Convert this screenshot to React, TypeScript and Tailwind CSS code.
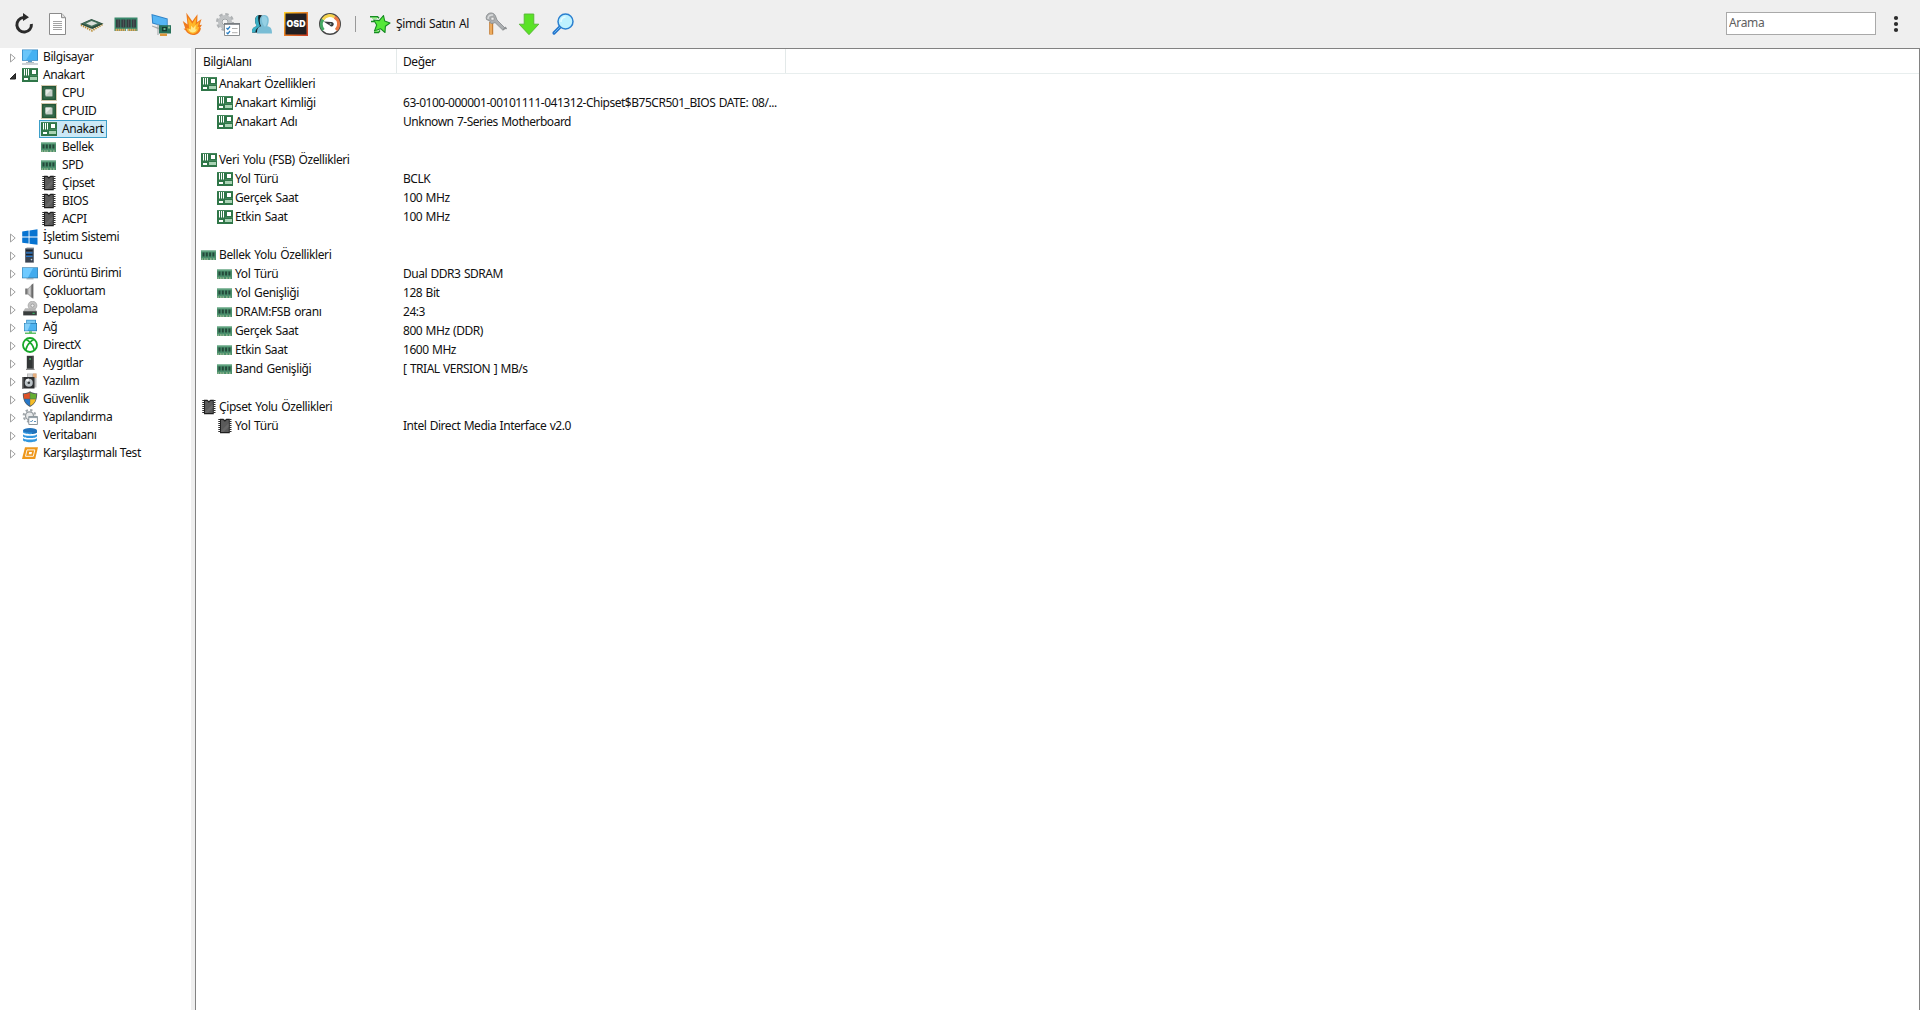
import type { ReactNode } from 'react'

interface TreeNode {
  label: string
  icon: ReactNode
  child?: boolean
  open?: boolean
  selected?: boolean
}

interface InfoRow {
  label?: string
  value?: string
  icon?: ReactNode
  group?: boolean
}

function Small({ children }: { children: ReactNode }) {
  return <svg className="w-4 h-4 shrink-0" viewBox="0 0 16 16">{children}</svg>
}

function Large({ children }: { children: ReactNode }) {
  return <svg className="w-6 h-6 shrink-0" viewBox="0 0 24 24" fill="none">{children}</svg>
}

/* ---- 16px icons ---- */

const Board = () => (
  <Small>
    <path fill="#2f7648" d="M0 1h16v14H0z" />
    <path fill="#fff" d="M2 2h1v6.500H2zM4 2h1v6.500H4zM6 2h1v6.500H6zM10 3h4v4h-4zM2 11h4v2H2z" />
    <path fill="#a9d3b4" d="M8 10h7v3H8z" />
    <path fill="#58966d" d="M0 1h16v.6H0zM8 8.500h8v.6H8z" />
  </Small>
)

const Cpu = () => (
  <Small>
    <rect x=".5" y=".5" width="15" height="15" fill="none" stroke="#a8935a" strokeDasharray="1 1" />
    <path fill="#245537" d="M1 1h14v14H1z" />
    <path fill="#3f7453" d="M2.500 2.500h11v11h-11z" />
    <path fill="#29583c" d="M3.500 3.500h9v9h-9z" />
    <path fill="#c5cfc7" d="M4.500 4.500h7v7h-7z" />
    <path fill="#e6ebe6" d="M4.500 4.500h6l-6 6z" />
  </Small>
)

const Memory = () => (
  <Small>
    <path fill="#4a8f6c" d="M0 3.500h15V13H0z" />
    <path fill="#74b391" d="M0 3.500h15v1H0z" />
    <path fill="#24493a" d="M1.500 5.500h2v4h-2zM4.800 5.500h2v4h-2zM8.100 5.500h2v4h-2zM11.400 5.500h2v4h-2z" />
    <path fill="#8fb48c" d="M.5 11.300h1.600v1.600H.5zM3 11.300h1.600v1.600H3zM5.500 11.300h1.600v1.600H5.500zM9 11.300h1.600v1.600H9zM12 11.300h1.600v1.600H12z" />
  </Small>
)

const Chip = () => (
  <Small>
    <path d="M2.300 1v14M13.500 1v14" stroke="#2b2b2b" strokeWidth="2" strokeDasharray="1 1" />
    <path fill="#1f1f1f" d="M3 .7h3.400l1.500 1.300L9.400.7h3.400v14.600H3z" />
    <path fill="#5a5a5a" d="M4 2h2l1.900 1.800L9.800 2h2v12H4z" />
    <path fill="#777" d="M4 13l7.800-8v4L6.500 14H4z" opacity=".45" />
  </Small>
)

const Computer = () => (
  <Small>
    <path fill="#3385bf" d="M0 .5h16v11.300H0z" />
    <path fill="#45b1f2" d="M.8 1.200h14.400v9.800H.8z" />
    <path fill="#6ac6fa" d="M.8 1.200h9.400L4 11H.8z" />
    <path fill="#5a9bc7" d="M6 11.800h4v1.400H6z" />
    <path fill="#99a5ad" d="M4 13h8v.8H4zM0 14.500h16v.9H0z" />
  </Small>
)

const Windows = () => (
  <Small>
    <path fill="#0874d1" d="M.2 2.400l6.400-.9v6.100H.2zM7.500 1.400L15.500.3v7.300h-8zM.2 8.500h6.400v6.100l-6.400-.9zM7.500 8.500h8v7.300l-8-1.100z" />
  </Small>
)

const Server = () => (
  <Small>
    <path fill="#939aa0" d="M3.200 1.400L5 .4h7l-1.200 1z" />
    <path fill="#3b4451" d="M3.200 1.400h8.600v14.200H3.200z" />
    <path fill="#6c7580" d="M11 1.400l1-.8v14l-1 1z" />
    <path fill="#277ad0" d="M4 5.200h6.500v1.200H4zM4 8.800h6.500V10H4z" />
    <path fill="#1a222c" d="M4 3h6.500v1H4zM4 7h6.500v1H4z" />
    <circle cx="9.500" cy="12.600" r=".8" fill="#ccd5df" />
  </Small>
)

const Display = () => (
  <Small>
    <path fill="#3a81ae" d="M0 2.300h16v11H0z" />
    <path fill="#42abee" d="M.7 3h14.600v9.400H.7z" />
    <path fill="#6fcaff" d="M.7 3H11L6 12.400H.7z" />
    <path fill="#879aa6" d="M4.500 13.300h7v1h-7z" />
  </Small>
)

const Speaker = () => (
  <Small>
    <path fill="#777" d="M3.200 5.500h2.600v6H3.200z" />
    <path fill="#a6a6a6" d="M5.800 5.500L10.600.7v15L5.800 11.500z" />
    <path fill="#6a6a6a" d="M9.400 2L11.400.3v15.400l-2-1.700z" />
    <path fill="#ccc" d="M6.500 6l2-2v8l-2-1.500z" />
  </Small>
)

const Storage = () => (
  <Small>
    <circle cx="10.500" cy="4.600" r="4.400" fill="#c3c3c3" stroke="#999" strokeWidth=".6" />
    <circle cx="10.500" cy="4.600" r="1.600" fill="#eee" stroke="#8c8c8c" strokeWidth=".7" />
    <path fill="#b4b4b4" d="M3.200 7.200h9.600l2 3H1.200z" />
    <path fill="#393d3d" d="M1.200 10.200h13.600v4.200H1.200z" />
    <path fill="#36bd69" d="M10.500 11.800h2.200v1.100h-2.200z" />
  </Small>
)

const Network = () => (
  <Small>
    <path fill="#348cc6" d="M4.200.8H14v9.400H4.200z" />
    <path fill="#79c8f2" d="M5 1.500h8.200v3H5z" />
    <path fill="#246f9e" d="M2 4h13v8.200H2z" />
    <path fill="#4eb3f0" d="M2.600 4.600h11.800v7H2.600z" />
    <path fill="#85d0fa" d="M2.600 4.600h6l-3 7h-3z" />
    <path fill="#5fbf68" d="M3 13.600h11v1.400H3zM7 12.200h3v2H7z" />
  </Small>
)

const DirectX = () => (
  <Small>
    <circle cx="8" cy="8" r="7" fill="#fff" stroke="#17a92a" strokeWidth="1.800" />
    <path fill="none" stroke="#17a92a" strokeWidth="1.700" d="M3.600 13.200C4.600 9.500 6.200 6.800 8 5.300c1.800 1.500 3.400 4.200 4.400 7.900M4.300 3C6 3 7 4.200 8 5.300 9 4.200 10 3 11.700 3" />
  </Small>
)

const Device = () => (
  <Small>
    <path fill="#333637" d="M4.800.8h6.800v13H4.800z" />
    <path fill="#555" d="M10.500.8h1.200v13h-1.200z" />
    <path fill="#3ece65" d="M7.300 3.200h1.600v1.600H7.300z" />
    <path fill="#8c8c8c" d="M4 13.800h8.600v1.200H4z" />
  </Small>
)

const Software = () => (
  <Small>
    <path fill="#b8b8b8" d="M5 .5h9.500v14H5z" />
    <path fill="#e4ad7c" d="M11 .5h3.500v4.500H11z" />
    <path fill="#d7d7d7" d="M6 1.300h4v3H6z" />
    <path fill="#2d2f31" d="M0 4h12.500v11.500H0z" />
    <circle cx="6.800" cy="9.800" r="4" fill="#bcc3c7" />
    <path fill="#f1f3f4" d="M6.800 9.800L3.500 7a4.300 4.300 0 0 1 3.300-1.500z" />
    <circle cx="6.800" cy="9.800" r="1.300" fill="#33383a" />
    <path fill="#777" d="M0 4h1.500v11.500H0z" />
  </Small>
)

const Shield = () => (
  <Small>
    <path fill="#525a5f" d="M8 .2C10 1.600 12.500 2.200 15.200 2.200c0 6.200-1.700 11-7.200 13.700C2.500 13.200.8 8.400.8 2.200 3.500 2.200 6 1.600 8 .2z" />
    <path fill="#df5328" d="M7.800 1.500v6.300H2.100C1.800 6.300 1.700 4.700 1.700 3.100c2.300-.1 4.300-.6 6.100-1.600z" />
    <path fill="#65ae32" d="M8.200 1.500c1.800 1 3.800 1.500 6.100 1.600 0 1.600-.1 3.200-.4 4.700H8.200z" />
    <path fill="#2777c8" d="M2.200 8.200h5.600v6.600c-3.200-1.700-4.900-3.900-5.600-6.600z" />
    <path fill="#f6bd28" d="M8.200 8.200h5.600c-.7 2.700-2.400 4.900-5.600 6.600z" />
  </Small>
)

const Config = () => (
  <Small>
    <circle cx="7.500" cy="6.800" r="5.800" fill="none" stroke="#a2a8ac" strokeWidth="2.200" strokeDasharray="2.300 2.250" />
    <circle cx="7.500" cy="6.800" r="4" fill="#e8eaeb" stroke="#969ca0" strokeWidth="1.300" />
    <path fill="#fff" stroke="#7f898f" strokeWidth=".9" d="M6.800 7.500h8.600v8H6.800z" />
    <path fill="#98a4ab" d="M6.800 7.500h8.600v1.600H6.800z" />
    <path fill="none" stroke="#4c88b5" strokeWidth=".9" d="M8.300 12l1 1 1.500-2M12 12.500h2" />
  </Small>
)

const Database = () => (
  <Small>
    <path fill="#3297df" d="M1 3.300v1.800c0 2.800 14 2.800 14 0V3.300zM1 7.200v1.700c0 2.900 14 2.900 14 0V7.200c-1 2-13 2-14 0zM1 11.100v2c0 2.900 14 2.900 14 0v-2c-1 2-13 2-14 0z" />
    <ellipse cx="8" cy="3.300" rx="7" ry="2.300" fill="#2273bc" />
    <path fill="#1d69ad" d="M10 6.900c3-.2 5-.8 5-1.800v-1C14 5 12 5.500 10 5.700z" />
  </Small>
)

const Benchmark = () => (
  <Small>
    <path fill="#ee971b" d="M3 2.300h13l-2.800 11.600H0z" />
    <path fill="none" stroke="#fff" strokeWidth=".9" d="M5 4.900h7.800l-1.500 6.400H3.500z" />
    <path fill="#fff" d="M7.200 7h2.800l-.5 2.200H6.700z" />
  </Small>
)

/* ---- toolbar icons ---- */

const TOOLS: ReactNode[] = [
  <Large key="refresh">
    <path d="M11.500 5.500a7.300 7.300 0 1 0 7.900 6.500" stroke="#2b2b2b" strokeWidth="3" />
    <path d="M11 1l6 4.300L11 9z" fill="#2b2b2b" />
  </Large>,
  <Large key="report">
    <path d="M3.500 1.500h12.300l3.700 4v17h-16z" fill="#fff" stroke="#8b8b8b" />
    <path d="M15.500 1.500v4.200h4" fill="#ddd" stroke="#8b8b8b" />
    <path d="M7 9.500h9M7 11.500h9M7 13.500h9M7 15.500h9M7 17.500h9" stroke="#999" strokeWidth=".9" />
  </Large>,
  <Large key="cpu">
    <path d="M1 13l11 5.500L23 12" stroke="#b98c32" strokeWidth="2.200" strokeDasharray="1.300 1" />
    <path d="M0 12l11.500-5L23.500 11.700 12.300 17z" fill="#2b4c3d" />
    <path d="M2 11.500l9.500-4 9.500 3.800-9.500 4z" fill="#45705b" />
    <path d="M6 11.500l5.500-2.400 6 2.200-5.800 2.500z" fill="#dbe0da" />
  </Large>,
  <Large key="ram">
    <path d="M.5 5.500h23V19H.5z" fill="#39886b" />
    <path d="M2 7.500h4.300v8H2zM7.300 7.500h4.200v8H7.300zM12.500 7.500h4.200v8h-4.200zM17.700 7.500H22v8h-4.300z" fill="#343c40" />
    <path d="M4.200 7.500v8M9.400 7.500v8M14.600 7.500v8M19.800 7.500v8" stroke="#646b6f" strokeWidth=".6" />
    <path d="M1.500 17.800h10M14 17.800h8.500" stroke="#e0a65a" strokeWidth="2.200" strokeDasharray="1.500 .5" />
    <path d="M11.800 16.800h1.800V19h-1.800z" fill="#efefef" />
  </Large>,
  <Large key="display">
    <path d="M4 13.500l8 2.500-1 1.500-7-3z" fill="#aaa" />
    <path d="M3.500 2l16.200 4.500v9.500L4.200 11.500z" fill="#2e82c7" />
    <path d="M4.500 3.300l14.300 4v7.400L5.200 10.700z" fill="#55b5f4" />
    <path d="M11 13.200h12v8.300H11z" fill="#29725b" />
    <path d="M14 15h5v4.300h-5z" fill="#163a32" />
    <path d="M15.500 16h2v2h-2z" fill="#67b88d" />
    <path d="M20 14.500h2v2h-2z" fill="#92bb93" />
    <path d="M12 21.500h7V24h-7z" fill="#dd963b" />
    <path d="M10 12v11" stroke="#9ba1a3" />
  </Large>,
  <Large key="flame">
    <path d="M11 23C7.500 22.600 5 21 3.700 18.500L1.500 16.800l1.800-.2L.8 9l4.700 3.600L4.300.8l6 8.500L15.500 2.200l-.3 8L19.500 7l-1.800 6 2.300-.3-2 3.300 1 .2c-1 4.500-4 7-8 6.800z" fill="#ef7a1c" />
    <path d="M10.500 21.800c-3.500-.5-5.700-2.800-6-5.800l2.700.8-1.500-11.500 4.600 6.500L14.300 5.500 13.500 13l4-3.500-2 5.500 1.800-.3c-1 4.500-3.300 7.200-6.800 7.100z" fill="#ffb728" />
    <path d="M10.300 20.500c-2.500-.4-3.500-2-3.700-3.700l2.300.7.300-4 2 2.500 2.600-3-.5 4.500 1.500-.3c-.8 2.200-2.300 3.500-4.500 3.300z" fill="#ffe98a" />
  </Large>,
  <Large key="settings">
    <circle cx="9" cy="10" r="7.500" stroke="#afb2b4" strokeWidth="3" strokeDasharray="3.300 2.590" />
    <circle cx="9" cy="10" r="5.300" fill="#d9dbdc" stroke="#bfc2c4" strokeWidth="3.500" />
    <circle cx="9" cy="10" r="3" fill="#f3f3f3" stroke="#8c9093" strokeWidth=".8" />
    <path d="M8.500 11.500h15v12h-15z" fill="#fff" stroke="#8b8f91" />
    <path d="M8 11h16v1.800H8z" fill="#777c80" />
    <path d="M10.500 16l1.300 1.300 2.200-2.800M10.500 20.500l1.300 1.300L14 19" stroke="#287ec3" strokeWidth="1.300" />
    <path d="M16 16.500h5.500M16 20.700h5.500" stroke="#999" strokeWidth=".8" />
  </Large>,
  <Large key="users">
    <path d="M2 20.500c0-4 1.500-5.300 5-6.300C3.500 9 5 3 10 3c2 0 3.500 1 4.500 3L13 21z" fill="#111b21" />
    <path d="M2 20.500c0-4 1.300-5.300 4.500-6.300C4 9 5 4 8.500 3.300c-1 4 .5 8 1.500 11C7.500 16 5.500 17 5.500 20.500z" fill="#3aafc5" />
    <path d="M7 21.500c0-5 1-6.500 4.200-7.200-2.700-5-1.700-11.300 3.100-11.300s5.700 5.800 3 11.300c3.500.8 4.700 2.200 4.700 7.200z" fill="#79bdd5" />
    <path d="M12 5c2-2 5.500-.5 5.300 3.500-.1 3-1.300 5-2.300 6.500-2-2.500-4-6-3-10z" fill="#95d0e4" />
  </Large>,
  <Large key="osd">
    <defs>
      <linearGradient id="osd" x1="0" y1="0" x2="1" y2="1">
        <stop offset="0" stopColor="#ffd22b" />
        <stop offset=".5" stopColor="#e87d25" />
        <stop offset="1" stopColor="#c93822" />
      </linearGradient>
    </defs>
    <path d="M0 0h24v24H0z" fill="url(#osd)" />
    <path d="M1.500 1.500h21v21h-21z" fill="#211f22" />
    <text x="12" y="14.600" textAnchor="middle" textLength="19" lengthAdjust="spacingAndGlyphs" className="font-['Inter',sans-serif] text-[9px] font-black tracking-normal" fill="#fff">OSD</text>
  </Large>,
  <Large key="gauge">
    <circle cx="12" cy="12" r="10.300" fill="#fff" stroke="#464646" strokeWidth="1.400" />
    <path d="M5.500 18A8 8 0 0 1 5 7.500" stroke="#45aa64" strokeWidth="3" />
    <path d="M5 7.500a8 8 0 0 1 11.500-2.400" stroke="#f4d24d" strokeWidth="3" />
    <path d="M16.500 5.100A8 8 0 0 1 18 18" stroke="#e97743" strokeWidth="3" />
    <path d="M5.500 9.500l7.800.5a2.200 2.200 0 1 1-1.500 3.500z" fill="#34383c" />
    <circle cx="12.500" cy="12" r="1" fill="#9aa" />
  </Large>,
]

const Key = () => (
  <Large>
    <path d="M8.200 10v12.500" stroke="#bb742d" strokeWidth="4" />
    <path d="M8 10v12.500" stroke="#edab5d" strokeWidth="2.400" />
    <path d="M3.500 7.500a4.800 4.800 0 0 1 9-3.500l1.500 4 8 8-2.300 2L12 10.500c-3.500 1.800-5.500 1-5-1.500z" fill="#acafb1" stroke="#85898b" strokeWidth=".8" />
    <path d="M5 7c0-3 2-4.500 5-4" stroke="#dadcdd" strokeWidth="1.500" />
    <path d="M8 5.200h3v3H8z" fill="#efefef" stroke="#888" strokeWidth=".6" />
    <path d="M20 18l2.500-2.300 1 1.500" stroke="#8e9193" strokeWidth="1.500" />
  </Large>
)

const Download = () => (
  <Large>
    <path d="M7.200 2h9.600v10.200h5L12 22.700 2.200 12.200h5z" fill="#5ae226" stroke="#55b634" strokeWidth=".9" />
  </Large>
)

const Lens = () => (
  <Large>
    <path d="M9.500 14.500L3 21" stroke="#2475cc" strokeWidth="3.200" strokeLinecap="round" />
    <path d="M9 15l-5.500 5.500" stroke="#6bb9ef" strokeWidth="1" strokeLinecap="round" />
    <circle cx="14.500" cy="9.500" r="7.500" fill="#bff2ff" stroke="#2b80d0" strokeWidth="1.500" />
    <path d="M10 10a4.500 4.500 0 0 1 4.500-5" stroke="#e7fcff" strokeWidth="1.500" />
  </Large>
)

const Star = () => (
  <Large>
    <path d="M15.500 3.500l1.200 5.500 5.300 2-4.600 3.200-.4 6.300-4.500-3.800-6 2.300 2.200-6-3-5 5.500.6z" fill="#55e83a" stroke="#158b22" strokeWidth="1.100" strokeLinejoin="round" />
    <path d="M2 4.800h7.500l1.500 1.500M3 9.500h3.500M6 20.500h4.500l1.500-2" stroke="#158b22" strokeWidth="1.400" />
    <path d="M4 6h5M7 19.200h3.500" stroke="#55e83a" />
  </Large>
)

const TREE: TreeNode[] = [
  { label: 'Bilgisayar', icon: <Computer /> },
  { label: 'Anakart', icon: <Board />, open: true },
  { label: 'CPU', icon: <Cpu />, child: true },
  { label: 'CPUID', icon: <Cpu />, child: true },
  { label: 'Anakart', icon: <Board />, child: true, selected: true },
  { label: 'Bellek', icon: <Memory />, child: true },
  { label: 'SPD', icon: <Memory />, child: true },
  { label: 'Çipset', icon: <Chip />, child: true },
  { label: 'BIOS', icon: <Chip />, child: true },
  { label: 'ACPI', icon: <Chip />, child: true },
  { label: 'İşletim Sistemi', icon: <Windows /> },
  { label: 'Sunucu', icon: <Server /> },
  { label: 'Görüntü Birimi', icon: <Display /> },
  { label: 'Çokluortam', icon: <Speaker /> },
  { label: 'Depolama', icon: <Storage /> },
  { label: 'Ağ', icon: <Network /> },
  { label: 'DirectX', icon: <DirectX /> },
  { label: 'Aygıtlar', icon: <Device /> },
  { label: 'Yazılım', icon: <Software /> },
  { label: 'Güvenlik', icon: <Shield /> },
  { label: 'Yapılandırma', icon: <Config /> },
  { label: 'Veritabanı', icon: <Database /> },
  { label: 'Karşılaştırmalı Test', icon: <Benchmark /> },
]

const ROWS: InfoRow[] = [
  { label: 'Anakart Özellikleri', icon: <Board />, group: true },
  { label: 'Anakart Kimliği', icon: <Board />, value: '63-0100-000001-00101111-041312-Chipset$B75CR501_BIOS DATE: 08/...' },
  { label: 'Anakart Adı', icon: <Board />, value: 'Unknown 7-Series Motherboard' },
  {},
  { label: 'Veri Yolu (FSB) Özellikleri', icon: <Board />, group: true },
  { label: 'Yol Türü', icon: <Board />, value: 'BCLK' },
  { label: 'Gerçek Saat', icon: <Board />, value: '100 MHz' },
  { label: 'Etkin Saat', icon: <Board />, value: '100 MHz' },
  {},
  { label: 'Bellek Yolu Özellikleri', icon: <Memory />, group: true },
  { label: 'Yol Türü', icon: <Memory />, value: 'Dual DDR3 SDRAM' },
  { label: 'Yol Genişliği', icon: <Memory />, value: '128 Bit' },
  { label: 'DRAM:FSB oranı', icon: <Memory />, value: '24:3' },
  { label: 'Gerçek Saat', icon: <Memory />, value: '800 MHz (DDR)' },
  { label: 'Etkin Saat', icon: <Memory />, value: '1600 MHz' },
  { label: 'Band Genişliği', icon: <Memory />, value: '[ TRIAL VERSION ] MB/s' },
  {},
  { label: 'Çipset Yolu Özellikleri', icon: <Chip />, group: true },
  { label: 'Yol Türü', icon: <Chip />, value: 'Intel Direct Media Interface v2.0' },
]

function Expander({ open }: { open?: boolean }) {
  return (
    <svg className="w-2 h-2.5 shrink-0 mt-0.5" viewBox="0 0 8 10" fill="none">
      {open
        ? <path d="M6.500 2.500v5.500H1z" fill="#333" stroke="#222" />
        : <path d="M1.500 1v8L6.200 5z" fill="#fff" stroke="#a2a2a2" />}
    </svg>
  )
}

function TreeItem({ node }: { node: TreeNode }) {
  if (node.child) {
    return (
      <li className="flex h-[18px] pl-[39px]">
        <div className={`flex items-center gap-[5px] pl-px pr-[3px] border ${node.selected ? 'bg-[#cbe8f6] border-[#3c9fc9]' : 'border-transparent'}`}>
          {node.icon}
          <span>{node.label}</span>
        </div>
      </li>
    )
  }
  return (
    <li className="flex items-center h-[18px] pl-[9px]">
      <Expander open={node.open} />
      <span className="ml-[5px] mr-[5px]">{node.icon}</span>
      <span>{node.label}</span>
    </li>
  )
}

export default function App() {
  return (
    <div className="flex flex-col w-full h-screen overflow-hidden bg-[#efefef] font-['Noto_Sans','Open_Sans',sans-serif] text-[12px] leading-[18px] tracking-[-0.4px] text-[#111] whitespace-nowrap select-none [&_svg]:block">
      {/* Toolbar */}
      <header className="flex items-center h-12 shrink-0 pl-[7px] pr-[19px]">
        {TOOLS.map((tool, i) => (
          <button key={i} className="flex items-center justify-center w-[34px] h-8">{tool}</button>
        ))}
        <div className="w-px h-4 ml-2 bg-[#999]" />
        <button className="flex items-center h-8 ml-3">
          <Star />
          <span className="ml-1 w-[82px] text-left [word-spacing:1px]">Şimdi Satın Al</span>
        </button>
        <button className="flex items-center justify-center w-[34px] h-8"><Key /></button>
        <button className="flex items-center justify-center w-[34px] h-8"><Download /></button>
        <button className="flex items-center justify-center w-[34px] h-8"><Lens /></button>
        <input
          className="ml-auto w-[150px] h-[23px] mb-px px-[2px] pb-0.5 bg-white border border-[#a9a9a9] placeholder:text-[#606060] tracking-[-0.35px] outline-none"
          placeholder="Arama"
        />
        <svg className="w-[10px] h-6 ml-[15px]" viewBox="0 0 10 24" fill="#2b2b2b">
          <circle cx="5" cy="6" r="2.100" />
          <circle cx="5" cy="12" r="2.100" />
          <circle cx="5" cy="18" r="2.100" />
        </svg>
      </header>

      <div className="flex flex-1 min-h-0">
        {/* Navigation tree */}
        <nav className="w-[191px] shrink-0 bg-white">
          <ul>
            {TREE.map((node, i) => <TreeItem key={i} node={node} />)}
          </ul>
        </nav>

        {/* Details list */}
        <main className="flex-1 ml-1 bg-white border-l border-t border-r border-[#828282]">
          <div className="flex h-[25px] leading-[26px] border-b border-[#e8eeee]">
            <div className="w-[201px] pl-[7px] border-r border-[#e3e9e9]">BilgiAlanı</div>
            <div className="w-[389px] pl-[6px] border-r border-[#e3e9e9]">Değer</div>
          </div>
          {ROWS.map((row, i) => (
            <div key={i} className="flex items-center h-[19px]">
              <div className={`flex items-center gap-[2px] w-[207px] [word-spacing:1px] ${row.group ? 'pl-[5px]' : 'pl-[21px]'}`}>
                {row.icon}
                <span>{row.label}</span>
              </div>
              <span className="tracking-[-0.48px] [word-spacing:0.8px]">{row.value}</span>
            </div>
          ))}
        </main>
      </div>
    </div>
  )
}
